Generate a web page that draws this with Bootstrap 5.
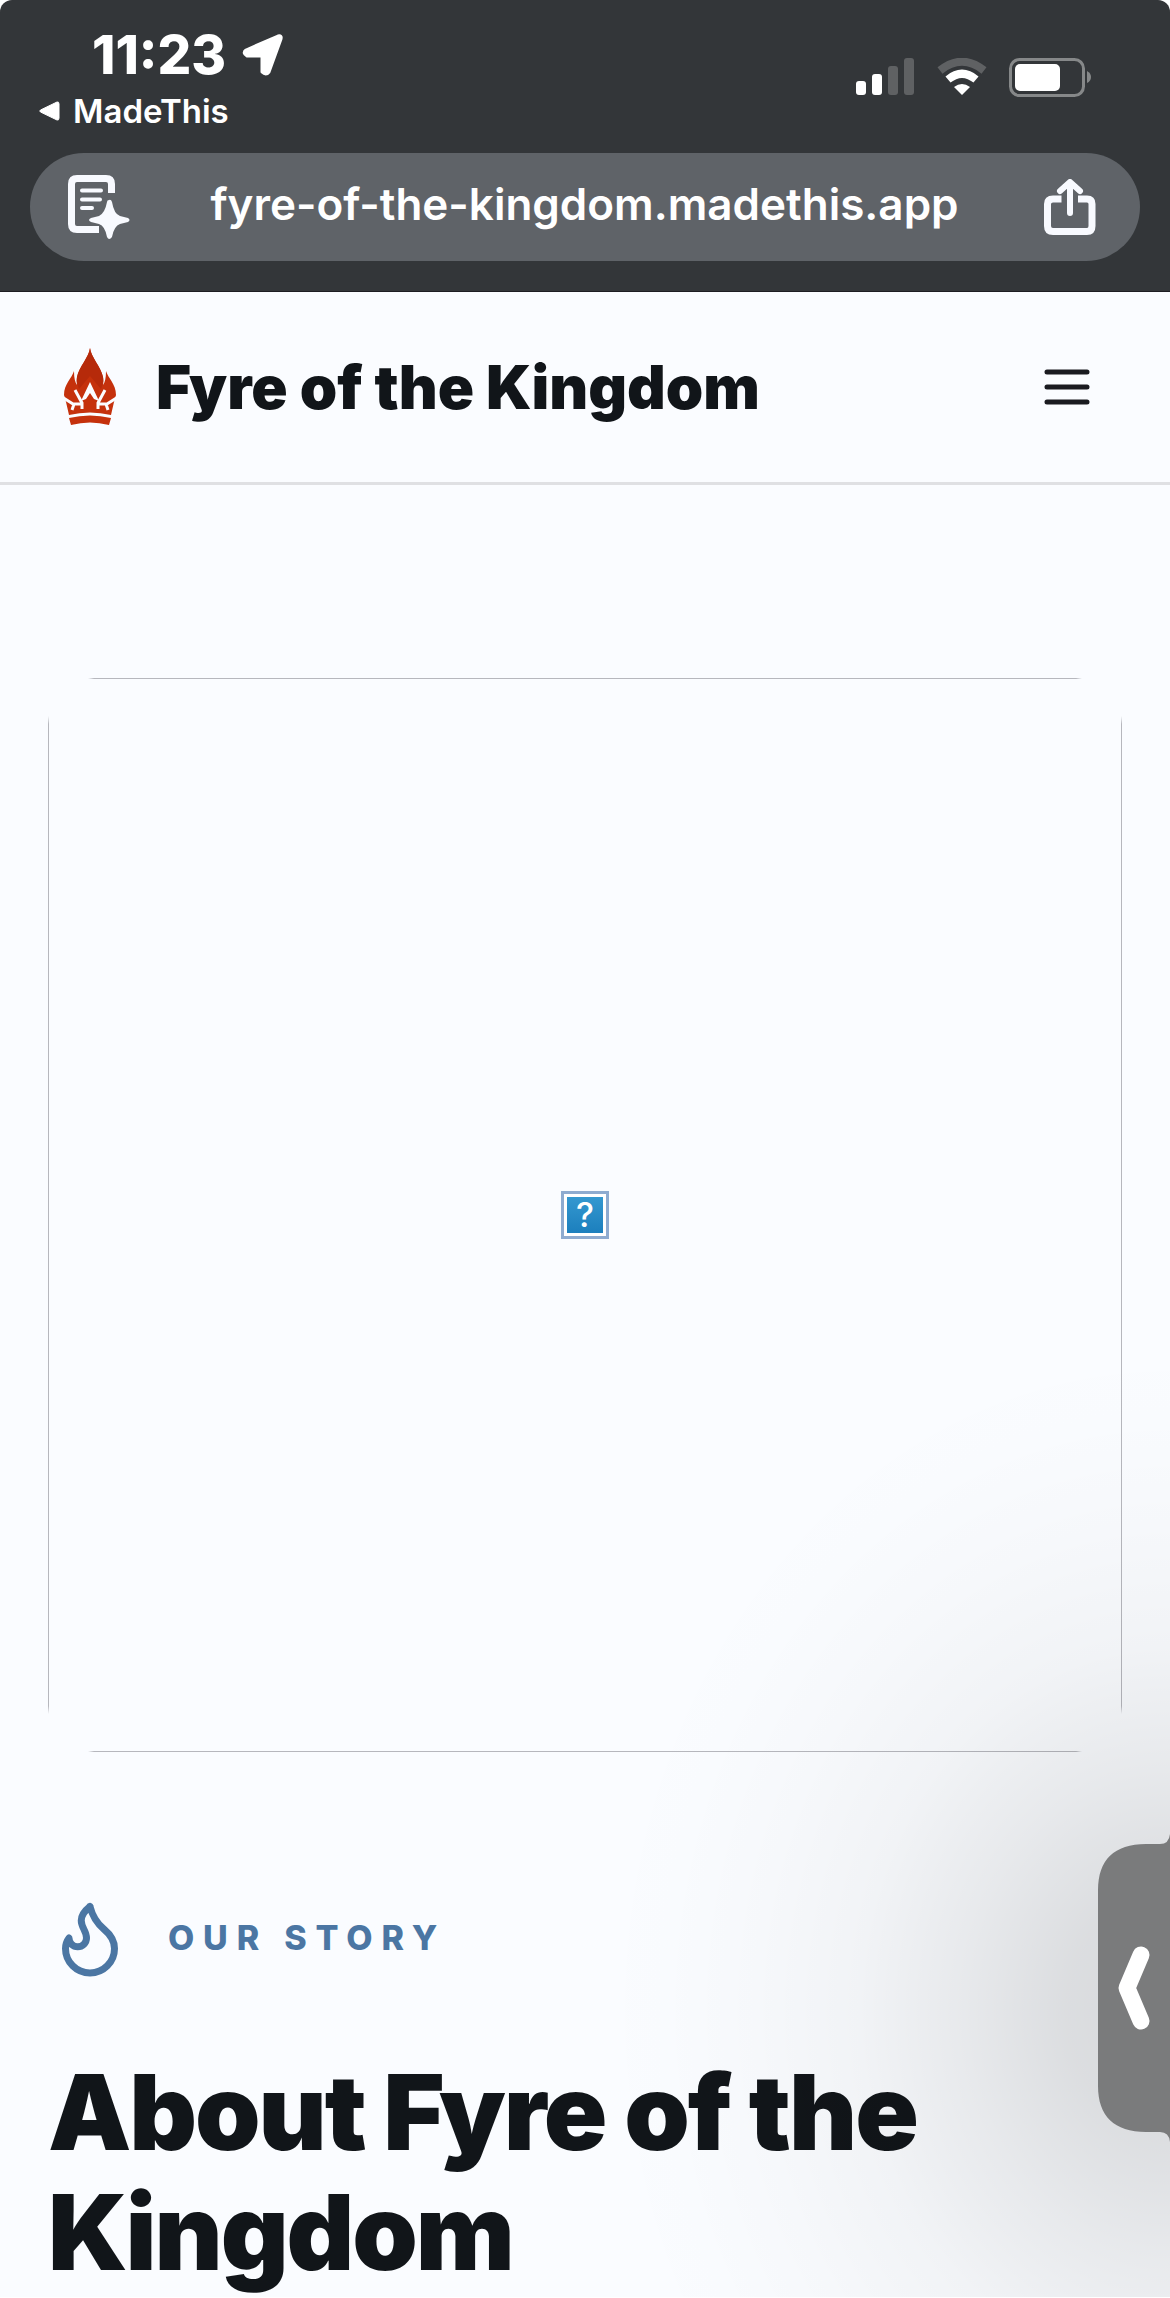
<!DOCTYPE html>
<html lang="en">
<head>
<meta charset="utf-8">
<meta name="viewport" content="width=device-width, initial-scale=1">
<title>Fyre of the Kingdom</title>
<link href="https://cdn.jsdelivr.net/npm/bootstrap@5.3.0/dist/css/bootstrap.min.css" rel="stylesheet">
<style>
  body { font-family: Inter, "Liberation Sans", sans-serif; background: #fff; color: #111519; }
  svg { display: block; flex: none; }
  .screen { background: #fafcff; }

  /* Browser chrome */
  .chrome { background: #333639; color: #fff; border-bottom: 1px solid #1d1d22; border-radius: 12px 12px 0 0; padding: 24px 30px 30px; }
  .chrome-corners { background: #fff; }
  .status-left { padding-left: 62px; gap: 16px; height: 61px; }
  .clock { font-size: 53px; line-height: 60px; font-weight: 800; }
  .status-right { gap: 22px; padding-right: 49px; height: 61px; padding-top: 34px; }
  .back-link { font-size: 33px; line-height: 36px; font-weight: 600; gap: 12px; padding-left: 8px; margin-top: 8px; }
  .omnibox { background: #5f6368; height: 108px; margin-top: 24px; padding: 0 44px 0 38px; }
  .omnibox input { font-size: 44px; line-height: 56px; font-weight: 600; padding: 0 5px 6px 0; min-width: 0; }

  /* Site */
  .site-nav { padding: 53px 73px 53px 48px; border-bottom: 3px solid #dfe0e3; }
  .site-name { font-size: 60px; line-height: 84px; font-weight: 900; gap: 24px; color: #111519; }
  .site-main { padding: 193px 48px 5px; }
  .photo-frame {
    aspect-ratio: 1;
    --line: #b6b7bd;
    background:
      linear-gradient(90deg, transparent 40px, var(--line) 46px calc(100% - 46px), transparent calc(100% - 40px)) top / 100% 1px no-repeat,
      linear-gradient(90deg, transparent 40px, var(--line) 46px calc(100% - 46px), transparent calc(100% - 40px)) bottom / 100% 1px no-repeat,
      linear-gradient(transparent 38px, var(--line) 46px calc(100% - 46px), transparent calc(100% - 38px)) left / 1px 100% no-repeat,
      linear-gradient(transparent 38px, var(--line) 46px calc(100% - 46px), transparent calc(100% - 38px)) right / 1px 100% no-repeat;
  }
  .missing-image { width: 48px; height: 48px; border: 3px solid #8eabd0; background: #fff; padding: 3px; }
  .missing-image span { background: linear-gradient(#3498d0, #1c7fbd); color: #fff; font-size: 34px; line-height: 36px; font-weight: 500; }
  .eyebrow { color: #4b76a3; font-size: 34px; line-height: 48px; font-weight: 800; letter-spacing: .26em; gap: 36px; margin-top: 144px; padding-bottom: 4px; }
  .page-title { font-size: 105px; line-height: 120px; font-weight: 900; letter-spacing: -.02em; margin: 68px 0 0; }

  /* Edge drawer */
  .edge-shade { top: 1300px; bottom: 0; right: 0; width: 620px; pointer-events: none;
    background: radial-gradient(ellipse 580px 680px at 100% 710px, rgba(0,0,0,.14), rgba(0,0,0,.12) 18%, rgba(0,0,0,.075) 36%, rgba(0,0,0,.037) 54%, rgba(0,0,0,.014) 72%, rgba(0,0,0,.004) 88%, transparent); }
  .edge-handle { top: 1828px; right: 0; }
</style>
<script src="https://cdn.jsdelivr.net/npm/bootstrap@5.3.0/dist/js/bootstrap.bundle.min.js"></script>
</head>
<body>
<div class="screen position-relative overflow-hidden">
  <div class="chrome-corners">
    <header class="chrome">
      <div class="d-flex justify-content-between">
        <div class="status-left d-flex align-items-center">
          <span class="clock">11:23</span>
          <svg width="42" height="44" viewBox="0 0 42 44" aria-hidden="true"><path d="M4 17 36 3Q40 2 39 6L27 39Q24 43 20 39V23H5Q0 20 4 17Z" fill="#fff" stroke="#fff" stroke-width="3" stroke-linejoin="round"/></svg>
        </div>
        <div class="status-right d-flex">
          <svg width="59" height="38" viewBox="0 0 59 38" aria-hidden="true"><g fill="#fff"><rect y="23" width="10" height="14" rx="3"/><rect x="16" y="16" width="10" height="21" rx="3"/><g fill="#5f6163"><rect x="32" y="8" width="10" height="29" rx="3"/><rect x="48" width="10" height="37" rx="3"/></g></g></svg>
          <svg width="50" height="38" viewBox="0 0 50 38" aria-hidden="true"><path d="M3 12.500Q25-5 47 12.500" fill="none" stroke="#5f6163" stroke-width="8"/><path d="M11 21.500Q25 10 39 21.500" fill="none" stroke="#fff" stroke-width="8"/><path d="M17 29Q25 23 33 29L25 37Z" fill="#fff"/></svg>
          <svg width="82" height="40" viewBox="0 0 82 40" aria-hidden="true"><rect x="1.500" y="1.500" width="73" height="36" rx="9" fill="none" stroke="#868889" stroke-width="3"/><rect x="6" y="6" width="45" height="27" rx="5" fill="#fff"/><path d="M78 13Q82 15 82 19T78 25Z" fill="#868889"/></svg>
        </div>
      </div>
      <a href="#" class="back-link d-inline-flex align-items-center text-white text-decoration-none">
        <svg width="23" height="22" viewBox="0 0 23 22" aria-hidden="true"><path d="M2.500 10 19 2Q21 1.500 21 4V18Q21 20.500 19 20L2.500 12Q1 11 2.500 10Z" fill="#fff" stroke="#fff"/></svg>
        MadeThis
      </a>
      <div class="omnibox rounded-pill d-flex align-items-center">
        <button type="button" class="btn p-0 border-0" aria-label="Page tools">
          <svg width="62" height="64" viewBox="0 0 62 64" fill="none" aria-hidden="true"><path d="M43.500 18V9Q43.500 3.500 38 3.500H9Q3.500 3.500 3.500 9V49Q3.500 54.500 9 54.500H31" stroke="#f8faff" stroke-width="7"/><path d="M14 15.500H33M14 24.500H32M14 33H24" stroke="#f8faff" stroke-width="4" stroke-linecap="round"/><path d="M41 25Q43 24 44 27Q46 39 52 41L60 43Q63 45 60 47L52 49Q46 51 44 62Q41 66 39 62Q37 51 31 49L23 47Q19 45 23 43L31 41Q37 38 39 27Q39 25 41 25Z" fill="#f8faff"/></svg>
        </button>
        <input type="text" class="form-control-plaintext flex-fill text-center text-white" value="fyre-of-the-kingdom.madethis.app" aria-label="Address">
        <button type="button" class="btn p-0 border-0" aria-label="Share">
          <svg width="52" height="57" viewBox="0 0 52 57" fill="none" stroke="#f8faff" aria-hidden="true"><path d="M17.500 20H9Q3.500 20 3.500 25V47Q3.500 52.500 9 52.500H43Q48 52.500 48 47V25Q48 20 43 20H34" stroke-width="7"/><path d="M26 34V4M16 12 26 3 36 12" stroke-width="6" stroke-linecap="round" stroke-linejoin="round"/></svg>
        </button>
      </div>
    </header>
  </div>

  <nav class="site-nav d-flex justify-content-between align-items-center">
    <a href="#" class="site-name d-flex align-items-center text-decoration-none">
      <svg width="84" height="84" viewBox="0 0 84 84" aria-hidden="true">
        <path d="M42 3C43 12 53 22 55 32Q56 36 55 40Q58 36 58 26C60 33 68 39 68 50L66 57L63 70Q42 65 21 70L18 57L16 50C16 39 24 33 26 26Q26 36 29 40Q28 36 29 32C31 22 41 12 42 3Z" fill="#c5310c"/>
        <path d="M42 3C43 12 53 22 55 32Q56 36 53 44L42 31L31 44Q28 36 29 32C31 22 41 12 42 3Z" fill="#b62a0a"/>
        <path d="M33 56 42 37 51 56 46 54 42 48 38 54Z" fill="#fbfcff"/>
        <path d="M14 52 25 59H35M27 45 34 58V64M24 65 26 59M70 52 59 59H49M57 45 50 58V64M60 65 58 59" fill="none" stroke="#fbfcff" stroke-width="3"/>
        <path d="M21 73Q42 68 63 73L61 80Q42 75 23 80Z" fill="#c5310c"/>
      </svg>
      <span>Fyre of the Kingdom</span>
    </a>
    <button type="button" class="btn p-0 border-0" aria-label="Open menu">
      <svg width="60" height="60" viewBox="0 0 24 24" fill="none" stroke="#1a1b20" stroke-width="2" stroke-linecap="round" aria-hidden="true"><path d="M4 6h16M4 12h16M4 18h16"/></svg>
    </button>
  </nav>

  <main class="site-main">
    <div class="photo-frame d-flex align-items-center justify-content-center">
      <div class="missing-image d-flex" role="img" aria-label="Image not available"><span class="flex-fill text-center">?</span></div>
    </div>
    <div class="eyebrow d-flex align-items-center">
      <svg width="84" height="84" viewBox="0 0 24 24" fill="none" stroke="currentColor" stroke-width="2" stroke-linecap="round" stroke-linejoin="round" aria-hidden="true"><path d="M12 3q1 4 4 6.500t3 5.500a1 1 0 0 1-14 0 5 5 0 0 1 1-3 1 1 0 0 0 5 0c0-2-1.500-3-1.500-5q0-2 2.500-4"/></svg>
      <span>OUR STORY</span>
    </div>
    <h1 class="page-title">About Fyre of the Kingdom</h1>
  </main>

  <div class="edge-shade position-absolute"></div>
  <button type="button" class="edge-handle btn p-0 border-0 rounded-0 position-absolute" aria-label="Open side panel">
    <svg width="72" height="320" viewBox="0 0 72 320" fill="none" aria-hidden="true"><path d="M72 6Q71 16 62 16H48C16 16 0 32 0 62V258C0 288 16 304 48 304H62Q71 304 72 314Z" fill="#7a7b7c"/><path d="M43 127 29 160 43 193" stroke="#fff" stroke-width="17" stroke-linecap="round" stroke-linejoin="round"/></svg>
  </button>
</div>
</body>
</html>
